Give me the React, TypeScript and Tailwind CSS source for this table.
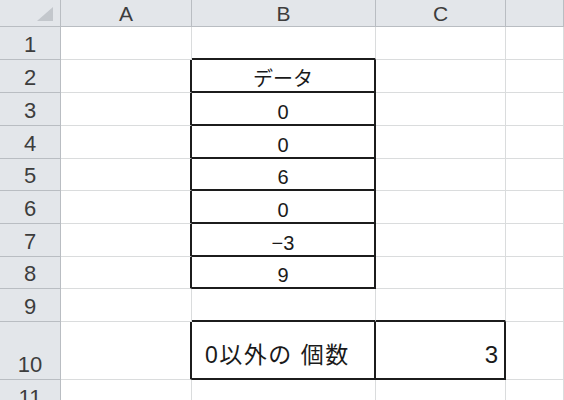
import clsx from "clsx";

// Column letters across the top; row 0 is the header band
const COLS = ["A", "B", "C", ""];
const ROWS = [1, 2, 3, 4, 5, 6, 7, 8, 9, 10, 11];

// Values in column B, keyed by row number
const data: Record<number, string> = {
  2: "データ",
  3: "0",
  4: "0",
  5: "6",
  6: "0",
  7: "−3",
  8: "9",
};

function Cell({ row, col }: { row: number; col: number }) {
  // col: 0 = A, 1 = B, 2 = C, 3 = D
  const inTable = col === 1 && row >= 2 && row <= 8;
  const inTotal = (col === 1 || col === 2) && row === 10;

  const cls = clsx(
    "border-r border-b border-[#dadcdd] flex min-w-0 overflow-hidden",
    // right edge of the box, or the left edge of the box to the right
    (inTable || inTotal || (col === 0 && row >= 2 && row <= 8) || (col === 0 && row === 10)) &&
      "border-r-2 border-r-[#1c1c1c]",
    // bottom edge of the box, or the top edge of the box below
    (inTable || inTotal || (col === 1 && row === 1) || ((col === 1 || col === 2) && row === 9)) &&
      "border-b-2 border-b-[#1c1c1c]",
  );

  if (inTable) {
    return (
      <div className={clsx(cls, "items-end justify-center pb-[2px]")}>
        <span className="text-[20px] leading-[20px] text-[#1a1a1a]">{data[row]}</span>
      </div>
    );
  }
  if (inTotal && col === 1) {
    return (
      <div className={clsx(cls, "items-center pt-[10px] pl-[13px]")}>
        <span className="text-[23px] leading-[23px] tracking-[1.5px] text-[#1a1a1a] whitespace-nowrap">
          0以外の 個数
        </span>
      </div>
    );
  }
  if (inTotal && col === 2) {
    return (
      <div className={clsx(cls, "items-center justify-end pt-[10px] pr-[6px]")}>
        <span className="text-[24px] leading-[24px] text-[#1a1a1a]">3</span>
      </div>
    );
  }
  return <div className={cls} />;
}

export default function App() {
  return (
    <div className="w-[564px] h-[400px] overflow-hidden bg-white font-['Liberation_Sans','Noto_Sans_CJK_JP',sans-serif]">
      <div className="grid grid-cols-[61px_131px_184px_130px_58px] grid-rows-[27px_33px_33px_33px_33px_32px_33px_33px_32px_33px_58px_33px]">
        {/* Corner */}
        <div className="bg-[#e3e6ea] border-r border-b border-[#b9bdc2] flex items-end justify-end pr-[7px] pb-[5px]">
          <svg width="16" height="14" viewBox="0 0 16 14">
            <polygon points="16,0 16,14 0,14" fill="#c3c7cc" />
          </svg>
        </div>
        {/* Column headers */}
        {COLS.map((c) => (
          <div
            key={c || "D"}
            className="bg-[#e3e6ea] border-r border-b border-[#b9bdc2] flex items-end justify-center pb-[2px]"
          >
            <span className="text-[21px] leading-[21px] text-[#3d3d3d]">{c}</span>
          </div>
        ))}

        {ROWS.map((r) => (
          <div key={r} className="contents">
            <div className="bg-[#e3e6ea] border-r border-b border-[#b9bdc2] flex items-end justify-center pb-[3px]">
              <span className="text-[22px] leading-[22px] text-[#3d3d3d]">{r}</span>
            </div>
            {[0, 1, 2, 3].map((c) => (
              <Cell key={c} row={r} col={c} />
            ))}
          </div>
        ))}
      </div>
    </div>
  );
}
